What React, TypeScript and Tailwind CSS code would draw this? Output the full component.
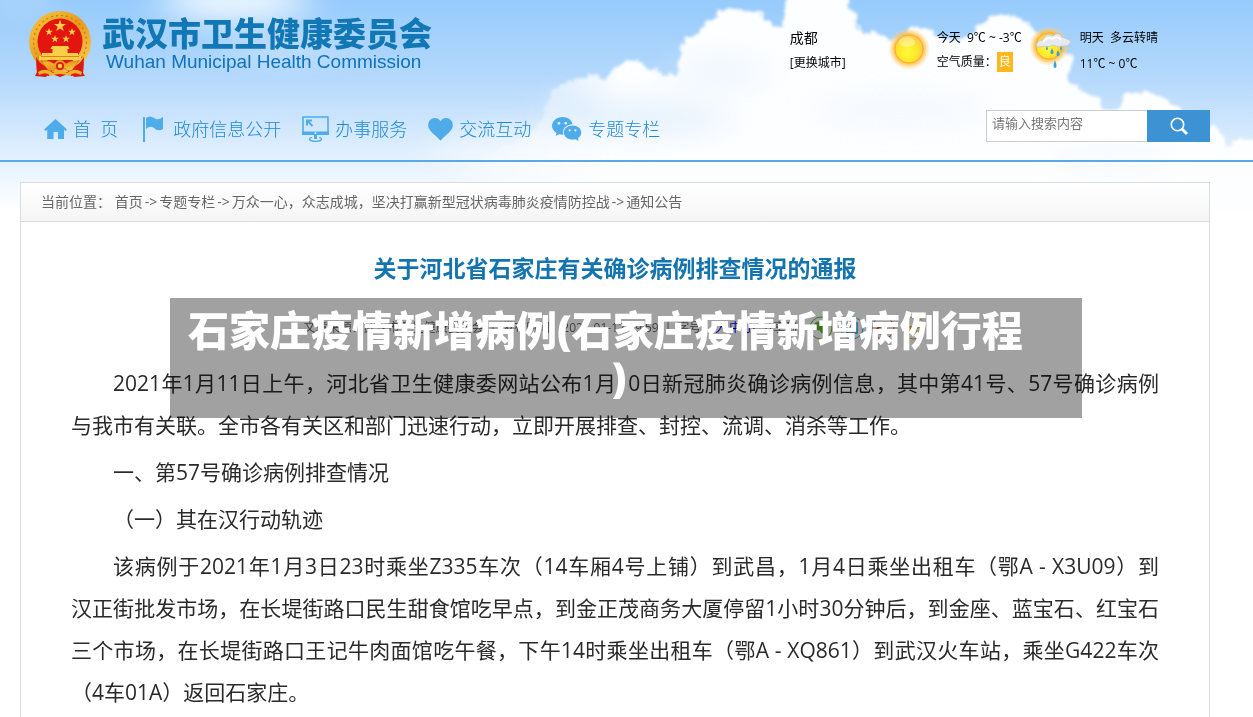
import type { ReactNode } from "react";

const sans = "font-['Open_Sans','Noto_Sans_CJK_SC',sans-serif]";

function Sky() {
  return (
    <svg
      aria-hidden="true"
      className="absolute inset-x-0 top-0 -z-10 h-[210px] w-full"
      viewBox="0 0 1253 210"
      preserveAspectRatio="xMidYMin slice"
    >
      <defs>
        <linearGradient id="sky" x1="0" y1="0" x2="0" y2="1">
          <stop offset="0" stopColor="#96cbfc" />
          <stop offset="0.38" stopColor="#b5d9fc" />
          <stop offset="0.76" stopColor="#e4f1fe" />
          <stop offset="1" stopColor="#ffffff" />
        </linearGradient>
        <linearGradient id="edge" x1="440" y1="0" x2="620" y2="0" gradientUnits="userSpaceOnUse">
          <stop offset="0" stopColor="#fff" stopOpacity="0" />
          <stop offset="0.55" stopColor="#fff" stopOpacity="0.5" />
          <stop offset="1" stopColor="#fff" stopOpacity="1" />
        </linearGradient>
        <mask id="fade" maskUnits="userSpaceOnUse" x="0" y="0" width="1253" height="210">
          <rect width="1253" height="210" fill="url(#edge)" />
        </mask>
        <filter
          id="puff"
          filterUnits="userSpaceOnUse"
          x="300"
          y="-40"
          width="1000"
          height="290"
          colorInterpolationFilters="sRGB"
        >
          <feTurbulence type="fractalNoise" baseFrequency="0.09" numOctaves="3" seed="4" />
          <feDisplacementMap in="SourceGraphic" scale="13" xChannelSelector="R" yChannelSelector="G" />
          <feGaussianBlur stdDeviation="1.6" />
        </filter>
        <filter
          id="soft"
          filterUnits="userSpaceOnUse"
          x="-100"
          y="-100"
          width="1450"
          height="400"
          colorInterpolationFilters="sRGB"
        >
          <feGaussianBlur stdDeviation="20 14" />
        </filter>
      </defs>
      <rect width="1253" height="210" fill="url(#sky)" />
      <g filter="url(#soft)" fill="#fff">
        <ellipse cx="235" cy="2" rx="75" ry="18" opacity="0.9" />
        <ellipse cx="290" cy="48" rx="70" ry="8" opacity="0.45" />
        <ellipse cx="20" cy="0" rx="35" ry="8" opacity="0.4" />
        <ellipse cx="560" cy="155" rx="130" ry="28" opacity="0.5" />
      </g>
      <g mask="url(#fade)">
        <path
          filter="url(#puff)"
          fill="#fdfeff"
          d="M400 230L470 165L530 135L545 110L552 92L562 82L580 80L592 73L604 80L612 68L626 62L640 65L654 68L660 76L676 75L680 60L684 42L700 32L712 16L727 8L745 11L760 12L770 24L784 26L782 10L790 -12L846 -12L852 8L856 24L866 34L880 33L890 42L900 36L914 28L930 30L946 40L972 34L980 22L1002 13L1020 18L1034 28L1042 42L1060 50L1076 60L1068 76L1072 86L1086 90L1100 98L1104 110L1120 108L1126 94L1140 90L1166 98L1182 110L1206 132L1216 128L1228 144L1270 138L1270 230Z"
        />
        <g filter="url(#soft)" fill="#e1effd">
          <ellipse cx="720" cy="72" rx="45" ry="18" opacity="0.5" />
          <ellipse cx="900" cy="110" rx="90" ry="18" opacity="0.3" />
          <ellipse cx="640" cy="118" rx="90" ry="18" opacity="0.8" />
          <ellipse cx="570" cy="108" rx="30" ry="14" opacity="0.8" />
          <ellipse cx="1110" cy="160" rx="60" ry="10" opacity="0.4" />
        </g>
      </g>
    </svg>
  );
}

const star = "M0 -5L1.2 -1.6L4.8 -1.6L1.9 0.6L3 4L0 1.9L-3 4L-1.9 0.6L-4.8 -1.6L-1.2 -1.6Z";

function Emblem() {
  return (
    <svg viewBox="0 0 64 68" className="h-[68px] w-16 shrink-0" aria-hidden="true">
      <defs>
        <linearGradient id="gold" x1="0" y1="0" x2="1" y2="1">
          <stop offset="0" stopColor="#f7c945" />
          <stop offset="0.5" stopColor="#e89a1c" />
          <stop offset="1" stopColor="#fbd45a" />
        </linearGradient>
      </defs>
      <path d="M8 46L56 46L55 63L57 66L46 67L43 63L32 67L21 63L18 67L7 66L9 62Z" fill="#dd1a12" />
      <ellipse cx="32" cy="32" rx="31" ry="31" fill="url(#gold)" />
      <ellipse cx="32" cy="32" rx="26.5" ry="26.5" fill="none" stroke="#c9780f" strokeWidth="1.2" strokeDasharray="2 3" />
      <ellipse cx="32" cy="31.5" rx="22.5" ry="23" fill="#e3150f" />
      <path d="M8 47Q14 58 26 58L21 66L9 64Z M56 47Q50 58 38 58L43 66L55 64Z" fill="#dd1a12" />
      <g fill="#f9cf4a">
        <path d={star} transform="translate(32 16) scale(1.25)" />
        <path d={star} transform="translate(21 22) scale(.8)" />
        <path d={star} transform="translate(44 22) scale(.8)" />
        <path d={star} transform="translate(27 29) scale(.8)" />
        <path d={star} transform="translate(38 29) scale(.8)" />
        <path d="M24 36H40L41.5 39H39.5V43H50V46H53V50H11V46H14V43H24.5V39H22.5Z" />
      </g>
      <path d="M13 46.5H51" stroke="#d88714" strokeWidth="1" />
      <path d="M14 52Q22 50 26 54Q32 46 38 54Q42 50 50 52L44 60Q38 62 37 58Q32 62 27 58Q26 62 20 60Z" fill="url(#gold)" stroke="#c9780f" strokeWidth=".6" />
      <circle cx="32" cy="56" r="4" fill="#dd1a12" />
      <circle cx="32" cy="56" r="2.2" fill="#f7c945" />
      <path d="M10 62Q18 57 25 63Q32 59 39 63Q46 57 54 62L53 65Q46 61 41 66Q32 62 23 66Q18 61 11 65Z" fill="#f0b02c" />
    </svg>
  );
}

function HomeIcon() {
  return (
    <svg viewBox="0 0 23 20" className="h-5 w-[23px]" fill="currentColor">
      <path d="M11.5 0L23 10.5L21.5 12L20 10.8V20H14V13H9.5V20H3.2V10.8L1.5 12L0 10.5Z" />
    </svg>
  );
}

function FlagIcon() {
  return (
    <svg viewBox="0 0 20 26" className="h-[26px] w-7" fill="currentColor">
      <path d="M0 1H2V26H0Z" />
      <path d="M3 2Q7 -1 11 2Q15 5 20 1V13Q15 16 11 12Q7 9 3 13Z" />
    </svg>
  );
}

function MonitorIcon() {
  return (
    <svg viewBox="0 0 27 26" className="h-[26px] w-[27px]" fill="none" stroke="currentColor">
      <path d="M1 1H26V17.5H1Z" strokeWidth="1.6" />
      <path d="M0 15.5H27V19H0Z" fill="currentColor" stroke="none" />
      <circle cx="13.5" cy="17" r="1" fill="#d9ebfd" stroke="none" />
      <path d="M5 9.5V4.5H10M5.5 5L10.5 10" strokeWidth="2" />
      <path d="M13.5 19V23" strokeWidth="3" />
      <path d="M10 21.5Q7 22 7.5 23.5Q9 25.3 13.5 25.3Q18 25.3 19.5 23.5Q20 22 17 21.5" strokeWidth="1.2" />
    </svg>
  );
}

function HeartIcon() {
  return (
    <svg viewBox="0 0 25 23" className="h-[23px] w-[25px]" fill="currentColor">
      <path d="M12.5 3.2C15 -1 20.5 -.6 23 2.2C25.6 5.2 25.4 9.5 22.6 12.8C20 16 15.5 19 12.5 22.8C9.5 19 5 16 2.4 12.8C-.4 9.5 -.6 5.2 2 2.2C4.5 -.6 10 -1 12.5 3.2Z" />
    </svg>
  );
}

function ChatIcon() {
  return (
    <svg viewBox="0 0 30 24" className="h-6 w-[30px]" fill="currentColor">
      <path d="M10.5 0C16 0 20 3.2 20.6 7.3C15 7.3 11 11 11 15.3C11 16.3 11.2 17 11.4 17.7C9.8 17.8 8.5 17.5 7.2 17.2L3.6 19L4.6 15.9C1.8 14.2 0 11.8 0 9C0 4 4.6 0 10.5 0Z" />
      <path d="M20.5 8.5C25.4 8.5 29.3 11.6 29.3 15.5C29.3 17.8 28 19.8 26 21L26.7 24L23.5 22.2C17.5 23.6 11.8 20.4 11.8 15.5C11.8 11.6 15.6 8.5 20.5 8.5Z" />
      <g fill="#f1f8ff">
        <circle cx="7" cy="6.3" r="1.3" />
        <circle cx="13.8" cy="6.3" r="1.3" />
        <circle cx="17.6" cy="13.3" r="1.1" />
        <circle cx="23.4" cy="13.3" r="1.1" />
      </g>
    </svg>
  );
}

function Sun() {
  return (
    <svg viewBox="0 0 44 44" className="size-11" aria-hidden="true">
      <defs>
        <radialGradient id="glow">
          <stop offset="0.55" stopColor="#ffa81f" />
          <stop offset="0.72" stopColor="#ffbf4a" stopOpacity="0.85" />
          <stop offset="1" stopColor="#ffd98a" stopOpacity="0" />
        </radialGradient>
        <radialGradient id="disc" cx="0.45" cy="0.6">
          <stop offset="0" stopColor="#fffb3a" />
          <stop offset="0.7" stopColor="#ffe62a" />
          <stop offset="1" stopColor="#ffd24a" />
        </radialGradient>
      </defs>
      <circle cx="22" cy="23" r="21" fill="url(#glow)" />
      <circle cx="22" cy="23" r="14" fill="url(#disc)" stroke="#ffab24" strokeWidth="1" />
      <ellipse cx="20" cy="16" rx="8" ry="5" fill="#fff" opacity=".35" />
    </svg>
  );
}

function SunRain() {
  return (
    <svg viewBox="0 0 44 44" className="size-11" aria-hidden="true">
      <circle cx="19" cy="20" r="20" fill="url(#glow)" />
      <circle cx="19" cy="20" r="13" fill="url(#disc)" stroke="#ffab24" />
      <path d="M6 20Q7 14 13 14Q16 6 23 10Q28 5 32 11Q36 12 41 15Q39 21 33 20Q28 22 23 19Q18 22 14 20Q9 22 6 20Z" fill="#e6eaf0" stroke="#b9c2cd" strokeWidth=".7" />
      <path d="M13 16Q17 10 22 13Q27 9 31 14" fill="none" stroke="#fff" strokeWidth="2" />
      <g fill="#3d9fd6">
        <path d="M22 22Q25 28 22 28Q19 28 22 22Z" />
        <path d="M28 24Q31 30 28 30Q25 30 28 24Z" />
        <path d="M17 20Q19 24 17 24Q15 24 17 20Z" />
        <path d="M31 20Q33 24 31 24Q29 24 31 20Z" />
        <path d="M25 34Q28 42 25 42Q22 42 25 34Z" />
      </g>
    </svg>
  );
}

function NavLink({ icon, children }: { icon: ReactNode; children: ReactNode }) {
  return (
    <a href="#" className="flex items-center gap-1.5 text-[#4facea]">
      {icon}
      <span className="text-lg font-light whitespace-pre text-[#1f88d6]">{children}</span>
    </a>
  );
}

function Header() {
  return (
    <header className="h-[162px] border-b-2 border-[#5aa9e4]">
      <div className="mr-[43px] ml-7 flex h-[110px] items-start justify-between">
        <div className="flex gap-2.5 pt-2.5">
          <Emblem />
          <div className="pt-1.5">
            <p className="text-[33px] leading-9 font-black text-[#1277b5]">武汉市卫生健康委员会</p>
            <p className="pl-1 font-['Liberation_Sans',sans-serif] text-[19px] leading-5 text-[#0e72bd]">
              Wuhan Municipal Health Commission
            </p>
          </div>
        </div>
        <div className="mr-[52px] flex pt-[26px] text-xs leading-6 text-black">
          <div className="w-[97px]">
            <p className="text-sm leading-6">成都</p>
            <a href="#" className="leading-[26px]">[更换城市]</a>
          </div>
          <Sun />
          <div className="ml-1.5 w-[93px]">
            <p className="whitespace-pre">今天  9℃ ~ -3℃</p>
            <p className="flex items-center">
              空气质量：
              <span className="bg-[#ffb81c] px-0.5 leading-5 text-white">良</span>
            </p>
          </div>
          <SunRain />
          <div className="ml-1.5">
            <p className="whitespace-pre">明天  多云转晴</p>
            <p className="leading-7">11℃ ~ 0℃</p>
          </div>
        </div>
      </div>
      <div className="mr-[43px] ml-11 flex items-start justify-between">
        <nav className="flex h-[38px] items-center gap-[21px]">
          <NavLink icon={<HomeIcon />}>首  页</NavLink>
          <NavLink icon={<FlagIcon />}>政府信息公开</NavLink>
          <NavLink icon={<MonitorIcon />}>办事服务</NavLink>
          <NavLink icon={<HeartIcon />}>交流互动</NavLink>
          <NavLink icon={<ChatIcon />}>专题专栏</NavLink>
        </nav>
        <form className="flex h-8" onSubmit={(e) => e.preventDefault()}>
          <input
            type="text"
            aria-label="搜索"
            placeholder="请输入搜索内容"
            className="w-[161px] border border-r-0 border-[#ccc] bg-white px-[5px] pb-1 text-[13px] placeholder:text-[#777]"
          />
          <button type="submit" aria-label="搜索" className="grid w-[63px] place-items-center bg-[#3d92d4]">
            <svg viewBox="0 0 18 18" className="size-[18px]" fill="none" stroke="#fff">
              <circle cx="7.5" cy="7.5" r="6.2" strokeWidth="1.6" />
              <path d="M12 12L17 17" strokeWidth="2.8" />
            </svg>
          </button>
        </form>
      </div>
    </header>
  );
}

function ShareIcons() {
  return (
    <span className="flex gap-[7px]">
      <svg viewBox="0 0 24 24" className="size-6" fill="#62b52e">
        <circle cx="12" cy="12" r="11" fill="none" stroke="#62b52e" />
        <ellipse cx="10" cy="10" rx="5" ry="4.5" />
        <ellipse cx="15" cy="14" rx="4" ry="3.5" />
      </svg>
      <svg viewBox="0 0 24 24" className="size-6" fill="none" stroke="#3a9fdc">
        <circle cx="12" cy="12" r="11" />
        <path d="M7 7H17V17H7ZM7 13H17M10 10H14" strokeWidth="1.6" />
      </svg>
      <svg viewBox="0 0 24 24" className="size-6" fill="none" stroke="#e6502e">
        <circle cx="12" cy="12" r="11" />
        <ellipse cx="11" cy="14" rx="5" ry="3.5" strokeWidth="2" />
        <path d="M14 7Q18 6 18 11" strokeWidth="1.5" />
      </svg>
      <svg viewBox="0 0 24 24" className="size-6" fill="#f5a623">
        <circle cx="12" cy="12" r="11" fill="none" stroke="#f5a623" />
        <path d={star} transform="translate(12 12.5) scale(1.5)" />
      </svg>
    </span>
  );
}

function Crumb({ first, children }: { first?: boolean; children: ReactNode }) {
  return (
    <>
      {!first && <span className="px-0.5">-&gt;</span>}
      <a href="#">{children}</a>
    </>
  );
}

// keeps a phrase on one line
function Keep({ children }: { children: ReactNode }) {
  return <span className="whitespace-nowrap">{children}</span>;
}

function Article() {
  return (
    <main className="mt-5 mr-[43px] ml-5 border border-b-0 border-[#dcdcdc] bg-white">
      <div className="border-b border-[#dcdcdc] bg-gradient-to-b from-white to-[#f5f5f5] px-5 text-sm leading-[38px] text-[#666]">
        当前位置： <Crumb first>首页</Crumb>
        <Crumb>专题专栏</Crumb>
        <Crumb>万众一心，众志成城，坚决打赢新型冠状病毒肺炎疫情防控战</Crumb>
        <Crumb>通知公告</Crumb>
      </div>
      <article className="px-[50px] pt-7 pb-1">
        <h1 className="text-center text-[23px] leading-9 font-bold text-[#1374b0]">
          关于河北省石家庄有关确诊病例排查情况的通报
        </h1>
        <div className="mt-[30px] flex h-6 items-center justify-center gap-1.5 text-xs text-[#666]">
          <span>文章来源：武汉市卫生健康委员会</span>
          <span>|</span>
          <span>发布时间：2021-01-12 09:59</span>
          <span>|</span>
          <span className="flex gap-0.5">
            字号：
            <a href="#" className="text-[#00f]">大</a>
            <a href="#" className="text-[#00f]">中</a>
            <a href="#" className="text-[#00f]">小</a>
          </span>
          <span className="flex items-center">
            分享到：
            <ShareIcons />
          </span>
        </div>
        <div className="mt-[22px] space-y-[5px] text-justify indent-[42px] text-[21px] leading-[42px] text-[#2a2a2a]">
          <p>
            2021年1月11日上午，河北省卫生健康委网站公布1月10日新冠肺炎确诊病例信息，其中第41号、57号确诊病例与我市有关联。全市各有关区和部门迅速行动，立即开展排查、封控、流调、消杀等工作。
          </p>
          <p>一、第57号确诊病例排查情况</p>
          <p>（一）其在汉行动轨迹</p>
          <p>
            该病例于2021年1月3日23时乘坐Z335车次（14车厢4号上铺）到武昌，1月4日乘坐出租车（鄂A - X3U09）到
            <Keep>汉正街</Keep>
            批发市场，在长堤街路口民生甜食馆吃早点，到金正茂商务大厦停留1小时30分钟后，到金座、蓝宝石、红宝石
            <Keep>三个</Keep>
            市场，在长堤街路口王记牛肉面馆吃午餐，下午14时乘坐出租车（鄂A - XQ861）到武汉火车站，乘坐G422车次
            <Keep>（4车01A）</Keep>
            返回石家庄。
          </p>
        </div>
      </article>
    </main>
  );
}

export default function App() {
  return (
    <div className={`relative isolate min-h-screen bg-white ${sans}`}>
      <Sky />
      <Header />
      <Article />
      <div className="absolute top-[298px] right-[171px] left-[170px] min-h-[120px] bg-black/37 pt-[9px] pr-8 pl-[18px] text-[41px] leading-[47px] font-black text-white">
        <p>石家庄疫情新增病例(石家庄疫情新增病例行程</p>
        <p className="text-center">)</p>
      </div>
    </div>
  );
}
